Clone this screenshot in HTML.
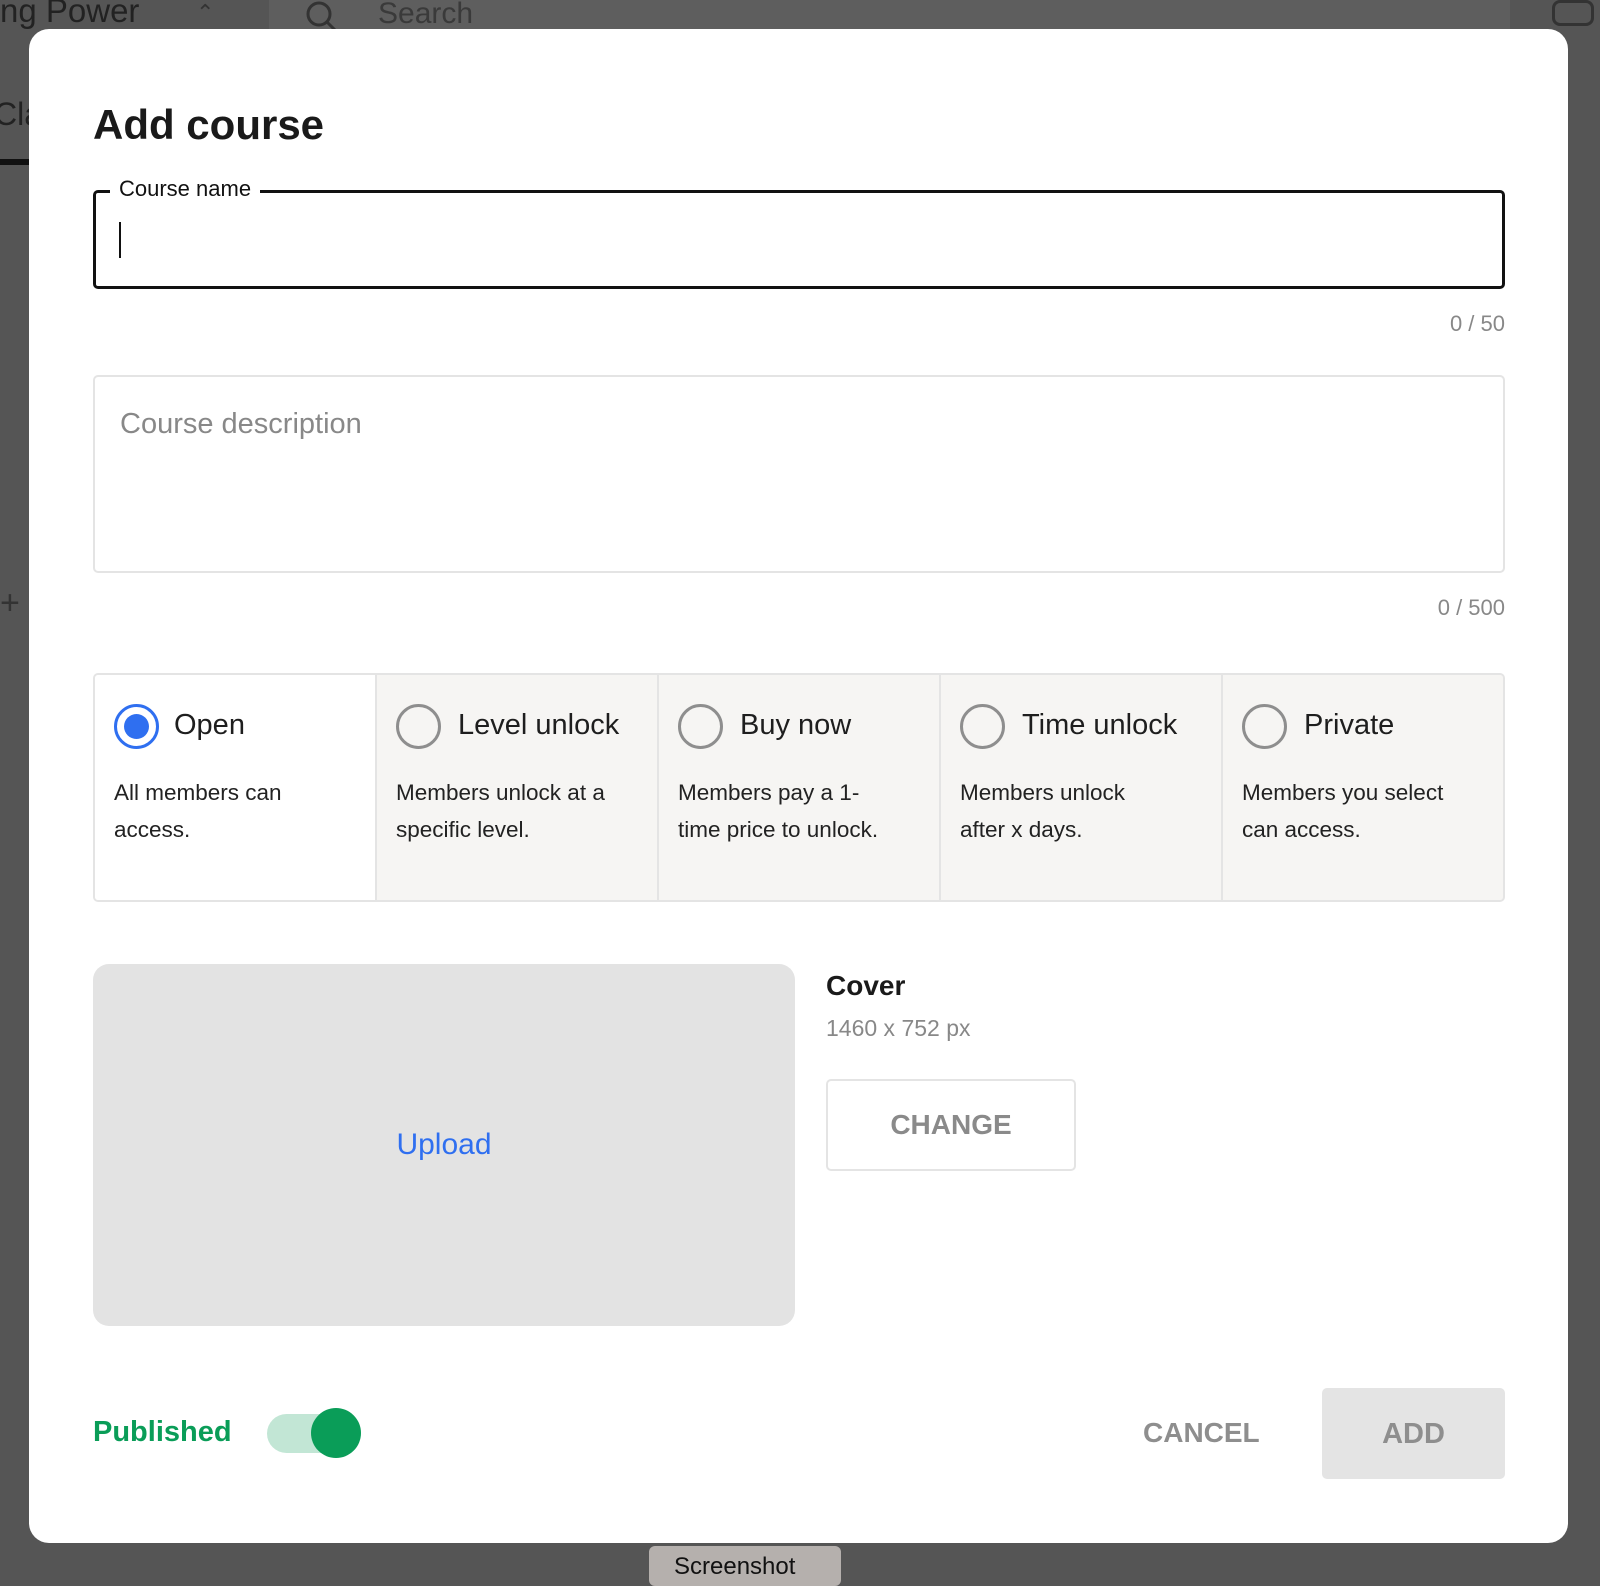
<!DOCTYPE html>
<html><head><meta charset="utf-8"><style>
*{margin:0;padding:0;box-sizing:border-box}
body{width:1600px;height:1571px;background:#555;font-family:"Liberation Sans",sans-serif;position:relative;overflow:hidden}
.a{position:absolute;white-space:nowrap}
.col{position:absolute;top:0;height:100%;width:282px;border-left:2px solid #e4e4e4;background:#f6f5f3}
.col .r{position:absolute;left:19px;top:29px;width:45px;height:45px;border-radius:50%;border:3px solid #8e8e8e}
.col .t{position:absolute;left:81px;top:34px;font-size:29px;color:#1e1e1e}
.col .d{position:absolute;left:19px;top:99px;font-size:22.5px;line-height:37px;color:#222}
</style></head><body>
<div class="a" style="left:0;top:-8px;font-size:33px;color:#222">ng Power</div>
<div class="a" style="left:196px;top:0;font-size:22px;color:#333">⌃</div>
<div class="a" style="left:269px;top:0;width:1241px;height:30px;background:#5e5e5e"></div>
<svg class="a" style="left:303px;top:0" width="40" height="30"><circle cx="16" cy="14" r="11" fill="none" stroke="#333" stroke-width="3"/><line x1="24" y1="22" x2="32" y2="30" stroke="#333" stroke-width="3"/></svg>
<div class="a" style="left:378px;top:-3px;font-size:30px;color:#3a3a3a">Search</div>
<div class="a" style="left:1552px;top:0;width:42px;height:26px;border:3px solid #333;border-radius:8px"></div>
<div class="a" style="left:-6px;top:96px;font-size:32px;color:#222">Cla</div>
<div class="a" style="left:0;top:159px;width:29px;height:6px;background:#111"></div>
<div class="a" style="left:0;top:584px;font-size:34px;color:#333">+</div>
<div class="a" style="left:649px;top:1546px;width:192px;height:40px;background:#b5b0ad;border-radius:6px"></div>
<div class="a" style="left:674px;top:1553px;font-size:24px;color:#111">Screenshot</div>

<div class="a" style="left:29px;top:29px;width:1539px;height:1514px;background:#fff;border-radius:20px"></div>
<div class="a" style="left:93px;top:101px;font-size:42px;font-weight:bold;color:#1a1a1a">Add course</div>
<div class="a" style="left:93px;top:190px;width:1412px;height:99px;border:3px solid #111;border-radius:5px"></div>
<div class="a" style="left:110px;top:176px;padding:0 9px;background:#fff;font-size:22px;color:#111">Course name</div>
<div class="a" style="left:119px;top:222px;width:2px;height:36px;background:#111"></div>
<div class="a" style="right:95px;top:311px;font-size:22px;color:#888">0 / 50</div>
<div class="a" style="left:93px;top:375px;width:1412px;height:198px;border:2px solid #e4e4e4;border-radius:5px"></div>
<div class="a" style="left:120px;top:408px;font-size:29px;color:#888">Course description</div>
<div class="a" style="right:95px;top:595px;font-size:22px;color:#888">0 / 500</div>

<div class="a" style="left:93px;top:673px;width:1412px;height:229px;border:2px solid #e4e4e4;border-radius:5px;overflow:hidden;background:#f6f5f3">
 <div class="col" style="left:-2px;background:#fff;border-left:none"><div class="r" style="border-color:#2f6ff0;left:21px"><div style="position:absolute;left:7px;top:7px;width:25px;height:25px;border-radius:50%;background:#2f6ff0"></div></div><div class="t">Open</div><div class="d" style="left:21px">All members can<br>access.</div></div>
 <div class="col" style="left:280px"><div class="r"></div><div class="t">Level unlock</div><div class="d">Members unlock at a<br>specific level.</div></div>
 <div class="col" style="left:562px"><div class="r"></div><div class="t">Buy now</div><div class="d">Members pay a 1-<br>time price to unlock.</div></div>
 <div class="col" style="left:844px"><div class="r"></div><div class="t">Time unlock</div><div class="d">Members unlock<br>after x days.</div></div>
 <div class="col" style="left:1126px"><div class="r"></div><div class="t">Private</div><div class="d">Members you select<br>can access.</div></div>
</div>

<div class="a" style="left:93px;top:964px;width:702px;height:362px;background:#e3e3e3;border-radius:16px"></div>
<div class="a" style="left:93px;top:1128px;width:702px;text-align:center;font-size:30px;color:#2f6ff0">Upload</div>
<div class="a" style="left:826px;top:970px;font-size:28px;font-weight:bold;color:#1a1a1a">Cover</div>
<div class="a" style="left:826px;top:1015px;font-size:23px;color:#888">1460 x 752 px</div>
<div class="a" style="left:826px;top:1079px;width:250px;height:92px;border:2px solid #e4e4e4;border-radius:5px;text-align:center;line-height:88px;font-size:28px;font-weight:bold;color:#8a8a8a">CHANGE</div>

<div class="a" style="left:93px;top:1416px;font-size:29px;font-weight:bold;color:#0a9d58">Published</div>
<div class="a" style="left:267px;top:1414px;width:80px;height:39px;border-radius:20px;background:#c2e6d5"></div>
<div class="a" style="left:311px;top:1408px;width:50px;height:50px;border-radius:50%;background:#0a9d58"></div>
<div class="a" style="left:1143px;top:1417px;font-size:28px;font-weight:bold;color:#8e8e8e">CANCEL</div>
<div class="a" style="left:1322px;top:1388px;width:183px;height:91px;background:#e4e4e4;border-radius:5px;text-align:center;line-height:93px;font-size:29px;font-weight:bold;color:#8e8e8e">ADD</div>
</body></html>
